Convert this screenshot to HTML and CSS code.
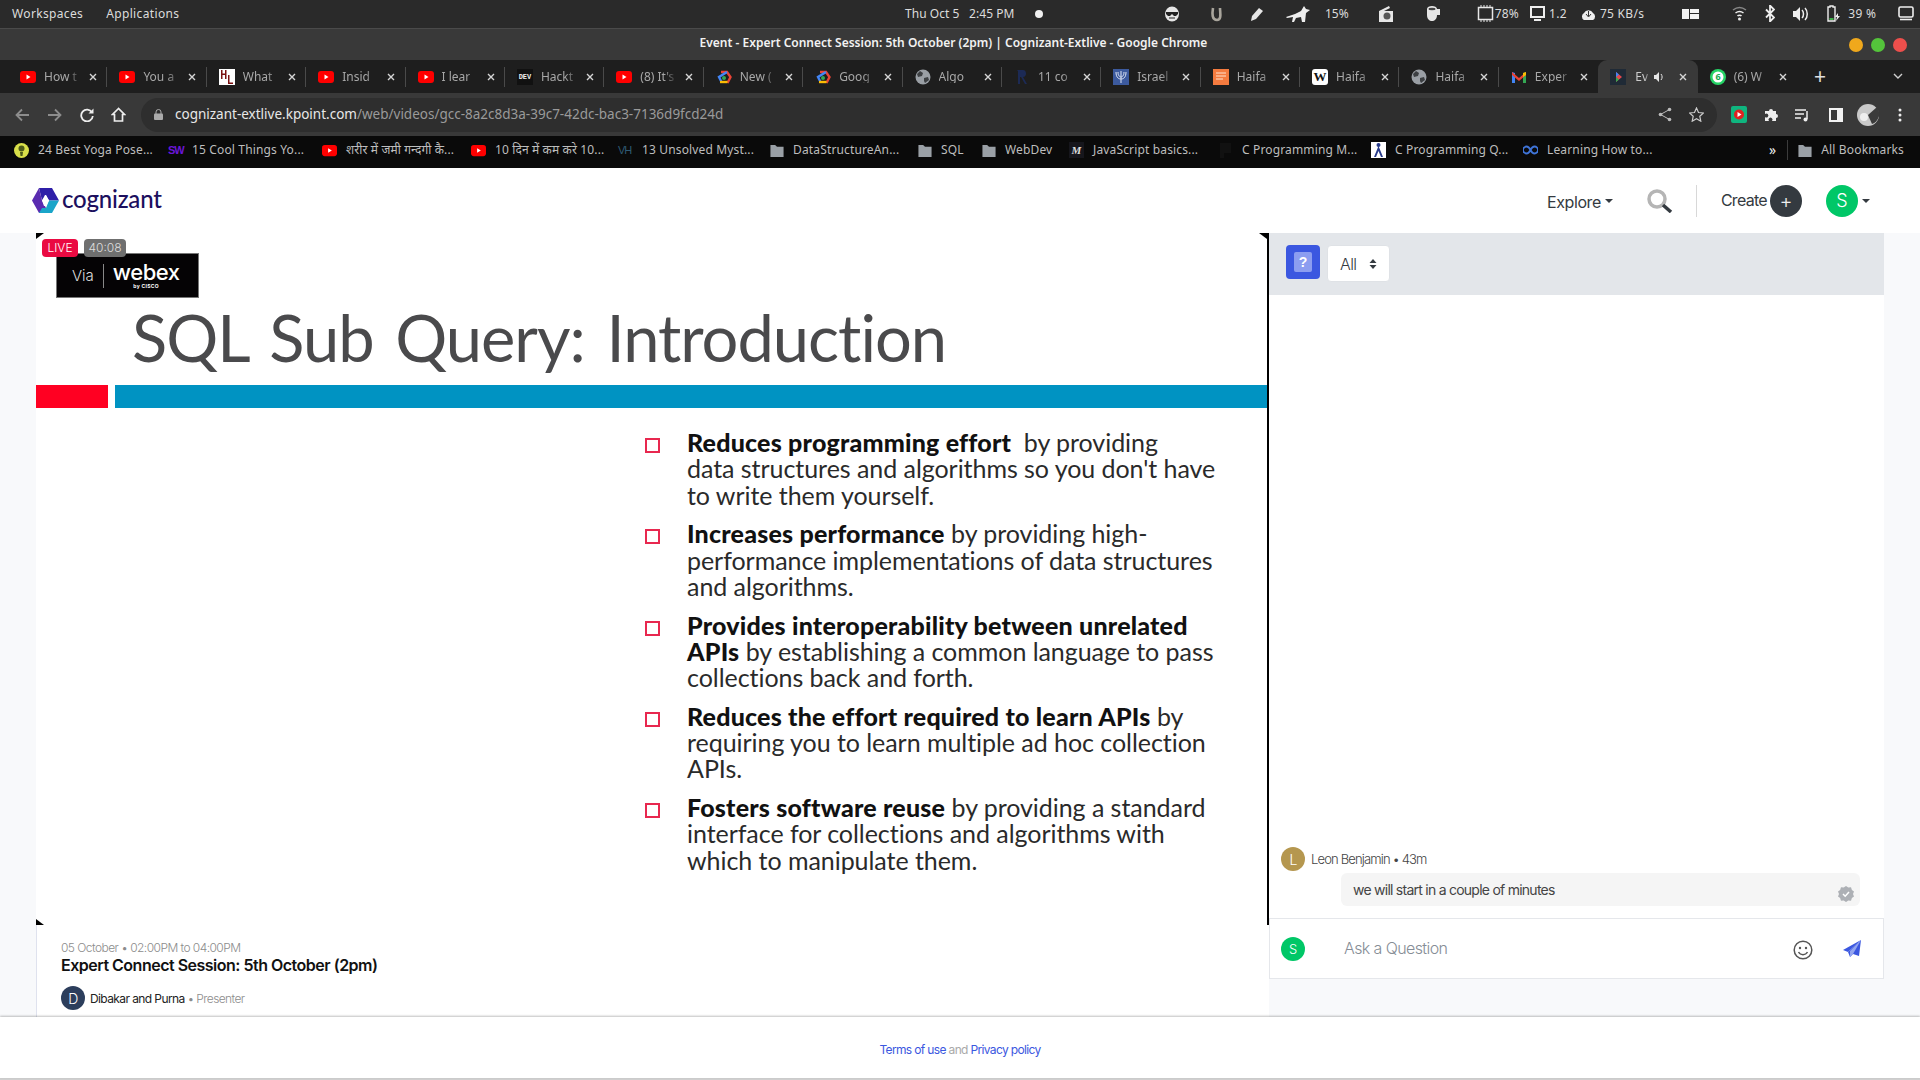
FILE: index.html
```html
<!DOCTYPE html>
<html lang="en">
<head>
<meta charset="utf-8">
<title>Event - Expert Connect Session</title>
<link rel="stylesheet" href="styles.css">
</head>
<body>
<svg class="defs" width="0" height="0" aria-hidden="true">
  <defs>
    <symbol id="yt" viewBox="0 0 16 16"><rect x="0" y="2" width="16" height="12" rx="3" fill="#f00"/><path d="M6.5 5.5v5l4-2.5z" fill="#fff"/></symbol>
    <symbol id="x" viewBox="0 0 8 8"><path d="M1 1l6 6M7 1l-6 6" stroke="#d6d6d6" stroke-width="1.4" fill="none"/></symbol>
    <symbol id="gc" viewBox="0 0 16 16"><path d="M5 3h6l3.500 5-3 6" stroke="#ea4335" stroke-width="2.400" fill="none"/><path d="M11 3l-8 5 2.500 5" stroke="#4285f4" stroke-width="2.400" fill="none"/><path d="M4 13h7.500" stroke="#fbbc04" stroke-width="2.400"/><circle cx="8" cy="9" r="2" fill="#34a853"/></symbol>
    <symbol id="globe" viewBox="0 0 16 16"><circle cx="8" cy="8" r="7.500" fill="#9a9fa5"/><path d="M5 2l3 2-1 3-4 1-1-3zM9 9l4-1 1 3-4 3-1-2z" fill="#3c3f42"/></symbol>
    <symbol id="folder" viewBox="0 0 14 16"><path d="M0 2h5l2 2h7v11H0z" fill="#9aa0a6"/></symbol>
  </defs>
</svg>

<header class="sysbar">
  <div class="sys-left"><span>Workspaces</span><span>Applications</span></div>
  <span class="clock">Thu Oct 5 &nbsp;&nbsp;2:45 PM</span>
  <span class="recdot"></span>
  <div class="sys-status">
    <svg class="st st-face" width="14" height="16" viewBox="0 0 14 16"><ellipse cx="7" cy="8" rx="7" ry="7.500" fill="#e6e6e6"/><path d="M1 6h12v2l-2 2H9L7 8 5 10H3L1 8z" fill="#222"/><path d="M4 12h6" stroke="#222"/></svg>
    <svg class="st st-j" width="12" height="16" viewBox="0 0 12 16"><path d="M3 2c-1 6-1 12 4 12s3-8 3-12" fill="none" stroke="#a9a59c" stroke-width="2.600"/></svg>
    <svg class="st st-pen" width="14" height="16" viewBox="0 0 14 16"><path d="M1 15l1-5 7-8 4 3-7 8z" fill="#e6e6e6"/></svg>
    <svg class="st st-dog" width="24" height="16" viewBox="0 0 24 16"><path d="M0 11l9-3 6-3 3-5 2 3 4 1-4 3-1 9h-3l-1-5-5 1-2 4H6l1-5-6 1z" fill="#eee"/></svg>
    <span class="st st-p15">15%</span>
    <svg class="st st-radio" width="16" height="17" viewBox="0 0 16 17"><path d="M1 6l10-5 1 2-6 3h9v11H1z" fill="#e6e6e6"/><circle cx="9" cy="11" r="3.500" fill="#555"/></svg>
    <svg class="st st-cup" width="16" height="17" viewBox="0 0 16 17"><path d="M1 4c0-4 10-4 10 0h3v6h-3c0 8-10 8-10 0z" fill="#e6e6e6"/><ellipse cx="6" cy="4" rx="3.500" ry="1.200" fill="#444"/></svg>
    <svg class="st st-cpu" width="17" height="17" viewBox="0 0 17 17"><rect x="1.500" y="2.500" width="14" height="12" fill="none" stroke="#e6e6e6" stroke-width="1.500"/><path d="M4 0v2M7 0v2M10 0v2M13 0v2M4 15v2M7 15v2M10 15v2M13 15v2" stroke="#e6e6e6"/></svg>
    <span class="st st-p78">78%</span>
    <svg class="st st-mon" width="15" height="15" viewBox="0 0 15 15"><rect x="1" y="1" width="13" height="10" fill="none" stroke="#eee" stroke-width="2"/><path d="M4 13h7v2H4z" fill="#eee"/></svg>
    <span class="st st-load">1.2</span>
    <svg class="st st-cloud" width="17" height="12" viewBox="0 0 17 12"><path d="M4 12a4 4 0 0 1 0-7 5 5 0 0 1 9 0 4 4 0 0 1 0 7z" fill="#eee"/><path d="M8.500 3v5M6 6l2.500 3L11 6" stroke="#333" fill="none"/></svg>
    <span class="st st-net">75 KB/s</span>
    <svg class="st st-lay" width="17" height="10" viewBox="0 0 17 10"><path d="M0 0h7v10H0zM8 0h9v4H8zM8 5h9v5H8z" fill="#f2f2f2"/></svg>
    <svg class="st st-wifi" width="15" height="15" viewBox="0 0 15 15"><path d="M1 4c4-3 9-3 13 0" stroke="#888" stroke-width="1.500" fill="none"/><path d="M3.500 7c2.500-2 5.500-2 8 0M5.500 10c1-1 3-1 4 0" stroke="#eee" stroke-width="1.500" fill="none"/><circle cx="7.500" cy="13" r="1.500" fill="#eee"/></svg>
    <svg class="st st-bt" width="10" height="17" viewBox="0 0 10 17"><path d="M1 4.500l8 8-4 4v-16l4 4-8 8" fill="none" stroke="#eee" stroke-width="1.800"/></svg>
    <svg class="st st-vol" width="16" height="14" viewBox="0 0 16 14"><path d="M0 4h3l4-4v14l-4-4H0z" fill="#eee"/><path d="M9 3c2 2 2 6 0 8M12 1c3 3 3 9 0 12" stroke="#eee" stroke-width="1.500" fill="none"/></svg>
    <svg class="st st-bat" width="14" height="17" viewBox="0 0 14 17"><path d="M3 1h3v1h2v14H1V2h2z" fill="none" stroke="#eee" stroke-width="1.400"/><rect x="2.500" y="13" width="4" height="2" fill="#3fae49"/><path d="M11 8l-3 4h2l-1 4 4-5h-2z" fill="#eee"/></svg>
    <span class="st st-pbat">39 %</span>
    <svg class="st st-screen" width="16" height="15" viewBox="0 0 16 15"><rect x="1" y="1" width="14" height="10" rx="1.500" fill="none" stroke="#eee" stroke-width="1.600"/><path d="M2 13.500h12" stroke="#eee" stroke-width="1.600"/></svg>
  </div>
</header>

<div class="titlebar">
  <span></span>
  <span class="wintitle">Event - Expert Connect Session: 5th October (2pm) | Cognizant-Extlive - Google Chrome</span>
  <div class="windots"><i class="dot amber"></i><i class="dot green"></i><i class="dot red"></i></div>
</div>

<nav class="tabs">
  <div class="tab"><svg class="fav"><use href="#yt"/></svg><span class="tname">How t</span><svg class="close"><use href="#x"/></svg></div>
  <div class="tab"><svg class="fav"><use href="#yt"/></svg><span class="tname">You a</span><svg class="close"><use href="#x"/></svg></div>
  <div class="tab"><svg class="fav" viewBox="0 0 16 16"><rect width="16" height="16" fill="#fff"/><path d="M2 1v9h1.500V6H6v4h1.500V1H6v3.500H3.500V1zM9 6v9h5v-1.500h-3.500V6z" fill="#7a1010"/></svg><span class="tname">What</span><svg class="close"><use href="#x"/></svg></div>
  <div class="tab"><svg class="fav"><use href="#yt"/></svg><span class="tname">Insid</span><svg class="close"><use href="#x"/></svg></div>
  <div class="tab"><svg class="fav"><use href="#yt"/></svg><span class="tname">I lear</span><svg class="close"><use href="#x"/></svg></div>
  <div class="tab"><span class="fav devfav">DEV</span><span class="tname">Hackt</span><svg class="close"><use href="#x"/></svg></div>
  <div class="tab"><svg class="fav"><use href="#yt"/></svg><span class="tname">(8) It's</span><svg class="close"><use href="#x"/></svg></div>
  <div class="tab"><svg class="fav"><use href="#gc"/></svg><span class="tname">New (</span><svg class="close"><use href="#x"/></svg></div>
  <div class="tab"><svg class="fav"><use href="#gc"/></svg><span class="tname">Goog</span><svg class="close"><use href="#x"/></svg></div>
  <div class="tab"><svg class="fav"><use href="#globe"/></svg><span class="tname">Algo</span><svg class="close"><use href="#x"/></svg></div>
  <div class="tab"><svg class="fav" viewBox="0 0 16 16"><path d="M3 1h6c4 0 4 7 0 7l4 7h-2L7 8H6v7H4V2z" fill="#1c2a55"/></svg><span class="tname">11 co</span><svg class="close"><use href="#x"/></svg></div>
  <div class="tab"><svg class="fav" viewBox="0 0 16 16"><rect width="16" height="16" fill="#3c5a9e"/><path d="M8 2v12M3 3c0 6 3 7 5 7s5-1 5-7M5 3c0 4 2 5 3 5s3-1 3-5" stroke="#dfe6f5" fill="none"/></svg><span class="tname">Israel</span><svg class="close"><use href="#x"/></svg></div>
  <div class="tab"><svg class="fav" viewBox="0 0 16 16"><rect width="16" height="16" fill="#f47b3f"/><path d="M3 4h10M3 7h10M3 10h7" stroke="#ffe3cf"/></svg><span class="tname">Haifa</span><svg class="close"><use href="#x"/></svg></div>
  <div class="tab"><span class="fav wikifav">W</span><span class="tname">Haifa</span><svg class="close"><use href="#x"/></svg></div>
  <div class="tab"><svg class="fav"><use href="#globe"/></svg><span class="tname">Haifa</span><svg class="close"><use href="#x"/></svg></div>
  <div class="tab"><svg class="fav" viewBox="0 0 16 16"><path d="M1 14V3l3 1v10z" fill="#4285f4"/><path d="M12 14V4l3-1v11z" fill="#34a853"/><path d="M1 3l7 6 7-6v3l-7 6-7-6z" fill="#ea4335"/><path d="M12 4l3-1v3l-3 2z" fill="#fbbc04"/></svg><span class="tname">Exper</span><svg class="close"><use href="#x"/></svg></div>
  <div class="tab active"><svg class="fav" viewBox="0 0 16 16"><rect width="16" height="16" fill="#1f2a36"/><path d="M6 3l6 5-6 5z" fill="#e5484d"/><path d="M6 3l3 2.500L6 8z" fill="#4285f4"/><path d="M6 13l3-2.500L6 8z" fill="#34a853"/></svg><span class="tname tshort">Ev</span><svg class="spk" width="10" height="12" viewBox="0 0 10 12"><path d="M0 4h2l3-3v10L2 8H0z" fill="#e6e6e6"/><path d="M7 3c1.500 2 1.500 4 0 6" stroke="#e6e6e6" fill="none"/></svg><svg class="close"><use href="#x"/></svg></div>
  <div class="tab last"><svg class="fav" viewBox="0 0 16 16"><circle cx="8" cy="8" r="8" fill="#25d366"/><circle cx="8" cy="8" r="5.500" fill="#fff"/><text x="8" y="11" class="wa-num">6</text></svg><span class="tname">(6) W</span><svg class="close"><use href="#x"/></svg></div>
  <span class="newtab">+</span>
  <svg class="tabmenu" width="10" height="7" viewBox="0 0 10 7"><path d="M1 1l4 4 4-4" stroke="#d0d0d0" stroke-width="1.400" fill="none"/></svg>
</nav>

<div class="toolbar">
  <svg class="nav-ic" width="14" height="14" viewBox="0 0 14 14"><path d="M14 7H2M7 1.500L1.500 7 7 12.500" stroke="#8d8d8d" stroke-width="1.800" fill="none"/></svg>
  <svg class="nav-ic fwd" width="14" height="14" viewBox="0 0 14 14"><path d="M0 7h12M7 1.500L12.500 7 7 12.500" stroke="#8d8d8d" stroke-width="1.800" fill="none"/></svg>
  <svg class="nav-ic rel" width="14" height="14" viewBox="0 0 14 14"><path d="M12 4.500A5.800 5.800 0 1 0 12.800 8" stroke="#eee" stroke-width="1.800" fill="none"/><path d="M13.500 0.500v5h-5z" fill="#eee"/></svg>
  <svg class="nav-ic home" width="15" height="15" viewBox="0 0 15 15"><path d="M7.500 1.500L1.500 7.500H3.500V14H11.500V7.500H13.500z" stroke="#eee" stroke-width="1.700" fill="none"/></svg>
  <div class="omnibox">
    <svg class="lock" width="9" height="11" viewBox="0 0 9 11"><path d="M2 5V3a2.500 2.500 0 0 1 5 0v2" stroke="#aaa" fill="none"/><rect y="4.500" width="9" height="6.500" rx="1" fill="#aaa"/></svg>
    <span class="url"><b>cognizant-extlive.kpoint.com</b>/web/videos/gcc-8a2c8d3a-39c7-42dc-bac3-7136d9fcd24d</span>
    <svg class="omni-r" width="14" height="15" viewBox="0 0 14 15"><circle cx="11.500" cy="2.500" r="1.800" fill="#bbb"/><circle cx="11.500" cy="12.500" r="1.800" fill="#bbb"/><circle cx="2.500" cy="7.500" r="1.800" fill="#bbb"/><path d="M11.500 2.500l-9 5 9 5" stroke="#bbb" fill="none"/></svg>
    <svg class="omni-star" width="15" height="15" viewBox="0 0 15 15"><path d="M7.500 1l2 4.500 5 .5-3.700 3.300 1 4.900-4.300-2.500-4.300 2.500 1-4.900L.5 6l5-.5z" stroke="#ccc" stroke-width="1.200" fill="none"/></svg>
  </div>
  <svg class="tb-ext" width="16" height="17" viewBox="0 0 16 17"><rect width="16" height="17" rx="2" fill="#0fb57f"/><circle cx="8" cy="8.500" r="5" fill="#e02020"/><path d="M6.500 6v5l4-2.500z" fill="#fff"/></svg>
  <svg class="tb-puz" width="15" height="15" viewBox="0 0 15 15"><path d="M1 4h4a2 2 0 1 1 4 0h3v3a2 2 0 1 1 0 4v3H8a2 2 0 1 0-3 0H1v-4a2 2 0 1 0 0-3z" fill="#eee"/></svg>
  <svg class="tb-mus" width="15" height="14" viewBox="0 0 15 14"><path d="M0 2h11M0 6h9M0 10h6" stroke="#eee" stroke-width="1.500"/><path d="M12 3v8" stroke="#eee" stroke-width="1.500"/><circle cx="10.500" cy="11.500" r="2" fill="#eee"/></svg>
  <svg class="tb-side" width="14" height="14" viewBox="0 0 14 14"><path d="M0 0h14v14H0zM2 2v10h6V2z" fill="#f2f2f2" fill-rule="evenodd"/></svg>
  <svg class="tb-av" width="22" height="22" viewBox="0 0 22 22"><circle cx="11" cy="11" r="11" fill="#c9c9c9"/><path d="M11 11l9-8a11 11 0 0 1-5 17z" fill="#3b3b3b"/><circle cx="7" cy="13" r="4" fill="#eee"/></svg>
  <svg class="tb-dots" width="4" height="14" viewBox="0 0 4 14"><circle cx="2" cy="2" r="1.500" fill="#eee"/><circle cx="2" cy="7" r="1.500" fill="#eee"/><circle cx="2" cy="12" r="1.500" fill="#eee"/></svg>
</div>

<div class="bookmarks">
  <div class="bm bm1"><svg width="15" height="15" viewBox="0 0 15 15"><circle cx="7.500" cy="7.500" r="7.500" fill="#d9e04a"/><circle cx="7.500" cy="5.500" r="3" fill="#4d5a1a"/><path d="M6 9h3l-.5 4h-2z" fill="#4d5a1a"/></svg><span>24 Best Yoga Pose...</span></div>
  <div class="bm bm2"><span class="swfav">SW</span><span>15 Cool Things Yo...</span></div>
  <div class="bm bm3"><svg width="15" height="15"><use href="#yt"/></svg><span>शरीर में जमी गन्दगी कै...</span></div>
  <div class="bm bm4"><svg width="15" height="15"><use href="#yt"/></svg><span>10 दिन में कम करे 10...</span></div>
  <div class="bm bm5"><span class="vhfav">VH</span><span>13 Unsolved Myst...</span></div>
  <div class="bm bm6"><svg width="14" height="15"><use href="#folder"/></svg><span>DataStructureAn...</span></div>
  <div class="bm bm7"><svg width="14" height="15"><use href="#folder"/></svg><span>SQL</span></div>
  <div class="bm bm8"><svg width="14" height="15"><use href="#folder"/></svg><span>WebDev</span></div>
  <div class="bm bm9"><span class="mfav">M</span><span>JavaScript basics...</span></div>
  <div class="bm bm10"><svg width="15" height="15" viewBox="0 0 15 15"><path d="M2 0h11v10H6v5H2z" fill="#111"/></svg><span>C Programming M...</span></div>
  <div class="bm bm11"><svg width="15" height="16" viewBox="0 0 15 16"><rect width="15" height="16" fill="#fff"/><path d="M7.500 4L3 15h2l2.500-6L10 15h2z" fill="#273a8a"/><circle cx="7.500" cy="3" r="2" fill="#273a8a"/></svg><span>C Programming Q...</span></div>
  <div class="bm bm12"><svg width="15" height="10" viewBox="0 0 15 10"><path d="M7.500 5C6 2 4.500 1.500 3.500 1.500a3.500 3.500 0 0 0 0 7C4.500 8.500 6 8 7.500 5s3-3.500 4-3.500a3.500 3.500 0 0 1 0 7c-1 0-2.500-.5-4-3.500z" fill="none" stroke="#3f74d8" stroke-width="1.800"/></svg><span>Learning How to...</span></div>
  <div class="bm-right">
    <span class="chev">»</span>
    <i class="bm-sep"></i>
    <svg width="14" height="15"><use href="#folder"/></svg><span>All Bookmarks</span>
  </div>
</div>

<header class="site">
  <div class="logo">
    <svg width="27" height="25" viewBox="0 0 27 25"><path d="M7 0h13l7 12.500H17l-3-5-4 5z" fill="#2f1fa8"/><path d="M7 0L0 12.500 7 25h4l3-5-4-7.500z" fill="#5a2bb0"/><path d="M27 12.500L20 25H7l3-5h4l3-7.500z" fill="#1aa5c9"/><path d="M17 12.500L14 18h-2l-2-5.500L13 7h1z" fill="#fff"/></svg>
    <span class="logotext">cognizant</span>
  </div>
  <div class="site-nav">
    <span class="explore">Explore</span><i class="caret"></i>
    <svg class="search" width="26" height="24" viewBox="0 0 26 24"><circle cx="10" cy="10" r="8" fill="none" stroke="#b5b5b5" stroke-width="3.500"/><path d="M16 16l8 7" stroke="#343a40" stroke-width="3.500"/></svg>
    <i class="vline"></i>
    <span class="create">Create</span>
    <span class="plus">+</span>
    <span class="avatar me">S</span><i class="caret"></i>
  </div>
</header>

<main class="main">
  <section class="player">
    <div class="slide">
      <i class="corner tl"></i><i class="corner tr"></i><i class="corner bl"></i>
      <div class="badges"><span class="live">LIVE</span><span class="time">40:08</span></div>
      <div class="webex"><span class="via">Via</span><i class="webex-sep"></i><span class="webex-name">webex<small>by CISCO</small></span></div>
      <h1 class="slide-title">SQL Sub Query: Introduction</h1>
      <div class="bars"><i class="bar-red"></i><i class="bar-blue"></i></div>
      <ul class="points">
        <li><b>Reduces programming effort</b>&nbsp; by providing<br>data structures and algorithms so you don't have<br>to write them yourself.</li>
        <li><b>Increases performance</b> by providing high-<br>performance implementations of data structures<br>and algorithms.</li>
        <li><b>Provides interoperability between unrelated<br>APIs</b> by establishing a common language to pass<br>collections back and forth.</li>
        <li><b>Reduces the effort required to learn APIs</b> by<br>requiring you to learn multiple ad hoc collection<br>APIs.</li>
        <li><b>Fosters software reuse</b> by providing a standard<br>interface for collections and algorithms with<br>which to manipulate them.</li>
      </ul>
    </div>
    <div class="meta">
      <div class="meta-date">05 October • 02:00PM to 04:00PM</div>
      <div class="meta-title">Expert Connect Session: 5th October (2pm)</div>
      <div class="presenter"><span class="avatar pres">D</span><span class="pname">Dibakar and Purna</span><span class="prole">&nbsp;• Presenter</span></div>
    </div>
  </section>

  <aside class="chat">
    <div class="chat-head">
      <span class="help"><span class="help-in">?</span></span>
      <div class="select"><span>All</span><svg width="8" height="12" viewBox="0 0 8 12"><path d="M4 1l3.500 4h-7zM4 11L.5 7h7z" fill="#343a40"/></svg></div>
    </div>
    <div class="messages">
      <div class="msg-who"><span class="avatar leon">L</span><span>Leon Benjamin • 43m</span></div>
      <div class="bubble"><span>we will start in a couple of minutes</span>
        <svg class="verified" width="16" height="16" viewBox="0 0 16 16"><path d="M8 0l2.300 1.500 2.700-.2.900 2.600 2.100 1.700-1 2.400 1 2.400-2.100 1.700-.9 2.600-2.700-.2L8 16l-2.300-1.500-2.700.2-.9-2.600L0 10.400 1 8 0 5.600l2.100-1.700.9-2.600 2.700.2z" fill="#adb0b5"/><path d="M5 8l2.200 2.200L11 6" stroke="#fff" stroke-width="1.500" fill="none"/></svg>
      </div>
    </div>
    <div class="ask">
      <span class="avatar me small">S</span>
      <span class="ask-ph">Ask a Question</span>
      <svg class="emoji" width="20" height="20" viewBox="0 0 20 20"><circle cx="10" cy="10" r="8.800" fill="none" stroke="#555" stroke-width="1.500"/><circle cx="7" cy="8" r="1.200" fill="#555"/><circle cx="13" cy="8" r="1.200" fill="#555"/><path d="M5.500 12c2 3.500 7 3.500 9 0" stroke="#555" stroke-width="1.500" fill="none"/></svg>
      <svg class="send" width="18" height="17" viewBox="0 0 18 17"><path d="M18 0L0 10l5 2z" fill="#3b57e0"/><path d="M18 0L5 12l2 5 3-3 6 2z" fill="#3b57e0"/><path d="M18 0L7 11l0 6 3-3z" fill="#93a5f0"/></svg>
    </div>
  </aside>
</main>

<footer class="foot"><a class="flink">Terms of use</a><span class="fand">&nbsp;and&nbsp;</span><a class="flink">Privacy policy</a></footer>
</body>
</html>
```
FILE: styles.css
```css
* { box-sizing: border-box; }
html, body { margin: 0; padding: 0; }
body {
  width: 1920px;
  height: 1080px;
  overflow: hidden;
  display: flex;
  flex-direction: column;
  background: #cfcfcf;
  font-family: "Inter", "Liberation Sans", sans-serif;
}
.defs { position: absolute; }
i { display: block; }

/* System bar */
.sysbar {
  height: 29px;
  flex: none;
  display: flex;
  align-items: center;
  background: #2a2a2a;
  border-bottom: 1px solid #4a4a4a;
  color: #dcdcdc;
  font: 12px/1 "Noto Sans", sans-serif;
  padding: 0 0 1px 12px;
}
.sys-left { display: flex; gap: 23px; width: 893px; letter-spacing: .35px; }
.clock { width: 130px; letter-spacing: .05px; }
.recdot { width: 8px; height: 8px; border-radius: 50%; background: #f0f0f0; }
.sys-status { display: flex; align-items: center; margin-left: 122px; }
.st { flex: none; }
.st-j { margin-left: 31px; }
.st-pen { margin-left: 28px; }
.st-dog { margin-left: 22px; }
.st-p15 { margin-left: 15px; }
.st-radio { margin-left: 29px; }
.st-cup { margin-left: 32px; }
.st-cpu { margin-left: 35px; }
.st-p78 { margin-left: 1px; letter-spacing: .2px; }
.st-mon { margin-left: 11px; }
.st-load { margin-left: 4px; letter-spacing: .3px; }
.st-cloud { margin-left: 13px; }
.st-net { margin-left: 3px; letter-spacing: .3px; }
.st-lay { margin-left: 38px; }
.st-wifi { margin-left: 33px; }
.st-bt { margin-left: 18px; }
.st-vol { margin-left: 18px; }
.st-bat { margin-left: 18px; }
.st-pbat { margin-left: 7px; letter-spacing: .3px; }
.st-screen { margin-left: 22px; }

/* Title bar */
.titlebar {
  height: 31px;
  flex: none;
  display: grid;
  grid-template-columns: 1fr auto 1fr;
  align-items: center;
  background: #393939;
  padding-right: 13px;
}
.wintitle { color: #f2f2f2; font: 600 12px/1 "Noto Sans", sans-serif; padding-bottom: 3px; }
.windots { display: flex; gap: 8px; justify-content: flex-end; }
.dot { width: 14px; height: 14px; border-radius: 50%; }
.amber { background: #f0a81c; }
.green { background: #54c43b; }
.red { background: #ed4f4c; }

/* Tabs */
.tabs {
  height: 33px;
  flex: none;
  display: flex;
  align-items: center;
  background: #1e1e1e;
  padding-left: 8px;
  color: #a8a8a8;
  font: 12px/1 "Noto Sans", sans-serif;
}
.tab {
  position: relative;
  flex: none;
  width: 99.4px;
  height: 33px;
  padding-left: 12px;
  display: flex;
  align-items: center;
}
.tab::after {
  content: "";
  position: absolute;
  right: 0;
  top: 7px;
  height: 20px;
  width: 1px;
  background: #4a4a4a;
}
.tab.active { background: #393939; border-radius: 9px 9px 0 0; color: #ccc; }
.tab.active::after, .tab.last::after { display: none; }
.tab:nth-child(16)::after { display: none; }
.fav { width: 16px; height: 16px; flex: none; }
.devfav {
  background: #111;
  color: #eee;
  font: 700 7px/16px "Liberation Mono", monospace;
  text-align: center;
}
.wikifav {
  background: #fff;
  color: #111;
  border-radius: 3px;
  font: 700 13px/16px "Liberation Serif", serif;
  text-align: center;
}
.wa-num { font: 700 9px "Noto Sans", sans-serif; fill: #12a84d; text-anchor: middle; }
.tname {
  width: 37px;
  margin-left: 8px;
  white-space: nowrap;
  -webkit-mask-image: linear-gradient(90deg, #000 65%, transparent);
  mask-image: linear-gradient(90deg, #000 65%, transparent);
}
.tshort { width: 15px; flex: none; margin-left: 9px; }
.spk { margin-left: 4px; flex: none; }
.close { width: 8px; height: 8px; margin-left: 8px; flex: none; }
.active .close { margin-left: 15px; }
.newtab { color: #e0e0e0; font: 400 21px/1 "Noto Sans", sans-serif; margin-left: 17px; width: 68px; }
.tabmenu { flex: none; margin-left: 11px; }

/* Toolbar */
.toolbar {
  height: 43px;
  flex: none;
  display: flex;
  align-items: center;
  background: #393939;
  padding-left: 15px;
}
.nav-ic { flex: none; }
.fwd { margin-left: 19px; }
.rel { margin-left: 18px; }
.home { margin-left: 17px; }
.omnibox {
  width: 1576px;
  flex: none;
  height: 34px;
  margin-left: 15px;
  border-radius: 17px;
  background: #2e2e2e;
  display: flex;
  align-items: center;
  padding-left: 13px;
}
.lock { flex: none; }
.url { margin-left: 12px; color: #9a9a9a; font: 13.500px/1 "Noto Sans", sans-serif; width: 1483px; flex: none; white-space: nowrap; padding-top: 1px; }
.url b { color: #e8e8e8; font-weight: 400; }
.omni-star { margin-left: 17px; flex: none; }
.omni-r { flex: none; }
.tb-ext { margin-left: 14px; flex: none; }
.tb-puz { margin-left: 17px; flex: none; }
.tb-mus { margin-left: 16px; flex: none; }
.tb-side { margin-left: 19px; flex: none; }
.tb-av { margin-left: 14px; flex: none; }
.tb-dots { margin-left: 19px; flex: none; }

/* Bookmarks */
.bookmarks {
  height: 32px;
  flex: none;
  display: flex;
  align-items: center;
  background: #0a0a0a;
  padding: 0 0 4px 14px;
  color: #bdbdbd;
  font: 12px/1 "Noto Sans", "Noto Sans CJK SC", sans-serif;
  letter-spacing: .15px;
}
.bm { display: flex; align-items: center; gap: 9px; flex: none; white-space: nowrap; }
.bm svg { flex: none; }
.bm1, .bm2 { width: 154px; }
.bm3 { width: 149px; }
.bm4 { width: 147px; }
.bm5 { width: 152px; }
.bm6 { width: 148px; }
.bm7 { width: 64px; }
.bm8 { width: 87px; }
.bm9 { width: 149px; }
.bm10 { width: 153px; }
.bm11 { width: 152px; }
.bm12 { width: 129px; }
.swfav { width: 15px; color: #6a16d8; font: 700 11px/1 "Liberation Sans", sans-serif; letter-spacing: -1px; }
.vhfav { width: 15px; color: #2f5a74; font: 400 11px/1 "Liberation Sans", sans-serif; letter-spacing: -1px; }
.mfav { width: 15px; height: 16px; background: #16161c; color: #ddd; font: italic 700 11px/16px "Liberation Serif", serif; text-align: center; }
.bm-right { display: flex; align-items: center; margin-left: 117px; }
.chev { color: #eee; font-size: 14px; }
.bm-sep { width: 1px; height: 20px; background: #3c3c3c; margin: 0 10px 0 11px; }
.bm-right span:last-child { margin-left: 9px; }

/* Site header */
.site {
  height: 65px;
  flex: none;
  background: #fff;
  display: flex;
  align-items: center;
  justify-content: space-between;
  padding: 0 50px 0 32px;
  color: #343a40;
}
.logo { display: flex; align-items: center; gap: 3px; }
.logotext { color: #1c0f5e; font: 500 24px/1 "Lato", sans-serif; letter-spacing: -.2px; padding-bottom: 3px; }
.site-nav { display: flex; align-items: center; }
.explore { font-size: 16px; letter-spacing: -.4px; padding-top: 2px; }
.caret {
  width: 0;
  height: 0;
  margin-left: 4px;
  border-left: 4px solid transparent;
  border-right: 4px solid transparent;
  border-top: 4px solid #343a40;
}
.search { margin-left: 34px; }
.vline { width: 1px; height: 32px; background: #d8d8d8; margin: 0 24px 0 23px; }
.create { font-size: 16px; letter-spacing: -.7px; margin-right: 3px; padding-bottom: 2px; }
.plus {
  width: 32px;
  height: 32px;
  border-radius: 50%;
  background: #343a40;
  color: #eee;
  display: flex;
  align-items: center;
  justify-content: center;
  font-size: 20px;
  font-weight: 300;
  margin-right: 24px;
}
.avatar {
  flex: none;
  border-radius: 50%;
  color: #fff;
  display: flex;
  align-items: center;
  justify-content: center;
  font-weight: 300;
}
.avatar.me { width: 32px; height: 32px; background: #00c767; font-size: 18px; }
.avatar.me.small { width: 24px; height: 24px; font-size: 13px; }

/* Main */
.main {
  height: 784px;
  flex: none;
  display: flex;
  background: #f8f9fb;
  padding-left: 36px;
}
.player { width: 1233px; flex: none; display: flex; flex-direction: column; }
.slide {
  position: relative;
  height: 692px;
  background: #fff;
  border-right: 2px solid #000;
  flex: none;
  color: #222;
}
.corner { position: absolute; width: 8px; height: 6px; background: #000; }
.tl { left: 0; top: 0; clip-path: polygon(0 0, 100% 0, 0 100%); }
.tr { right: 0; top: 0; clip-path: polygon(0 0, 100% 0, 100% 100%); }
.bl { left: 0; bottom: 0; clip-path: polygon(0 0, 100% 100%, 0 100%); }
.badges { position: absolute; left: 6px; top: 6px; display: flex; gap: 6px; z-index: 2; font-size: 12px; font-weight: 300; }
.live { width: 36px; height: 18px; border-radius: 4px; background: #ea0a42; color: #fff; line-height: 18px; text-align: center; }
.time { width: 42px; height: 18px; border-radius: 4px; background: #6f6f6f; color: #ddd; line-height: 18px; text-align: center; }
.webex {
  position: absolute;
  left: 20px;
  top: 20px;
  width: 143px;
  height: 45px;
  background: #050305;
  border: 1px solid #777;
  color: #fff;
  display: flex;
  align-items: center;
  padding-left: 15px;
  z-index: 1;
}
.via { font-size: 15px; font-weight: 300; color: #ddd; }
.webex-sep { width: 1px; height: 24px; background: #888; margin: 0 9px; }
.webex-name { font: 500 22px/1 "Inter", sans-serif; letter-spacing: -.5px; display: flex; flex-direction: column; align-items: center; margin-top: -1px; }
.webex-name small { font: 700 5px/1 "Inter", sans-serif; letter-spacing: .3px; margin-top: 1px; }
.slide-title {
  margin: 0;
  padding: 65px 0 0 96px;
  height: 152px;
  color: #4a4a4c;
  font: 400 65px/78px "Lato", sans-serif;
  letter-spacing: -1px;
  word-spacing: 6px;
  white-space: nowrap;
}
.bars { display: flex; gap: 7px; height: 23px; }
.bar-red { width: 72px; background: #ff0022; }
.bar-blue { flex: 1; background: #0093c2; }
.points {
  list-style: none;
  margin: 0;
  padding: 21px 0 0 651px;
  font: 400 25px/26.300px "Lato", sans-serif;
  letter-spacing: -.05px;
  white-space: nowrap;
  color: #2a2a2a;
}
.points li { position: relative; margin-bottom: 12.400px; }
.points li::before {
  content: "";
  position: absolute;
  left: -42px;
  top: 9px;
  width: 11px;
  height: 11px;
  border: 2px solid #e8284f;
}
.points b { font-weight: 900; color: #111; letter-spacing: .2px; }
.meta {
  flex: 1;
  background: #fff;
  border-left: 1px solid #dfe2ee;
  padding: 15px 0 0 24px;
}
.meta-date { font-size: 12px; font-weight: 300; letter-spacing: -.55px; color: #8c8c8c; line-height: 16px; }
.meta-title { font-size: 16px; font-weight: 600; letter-spacing: -.5px; color: #111; line-height: 20px; margin-top: -1px; }
.presenter { display: flex; align-items: center; margin-top: 11px; font-size: 12px; letter-spacing: -.6px; }
.avatar.pres { width: 24px; height: 24px; background: #2c3e5c; font-size: 14px; margin-right: 5px; }
.pname { color: #222; }
.prole { color: #8c8c8c; font-weight: 300; }

/* Chat */
.chat { width: 615px; flex: none; display: flex; flex-direction: column; padding-bottom: 38px; }
.chat-head {
  height: 62px;
  flex: none;
  background: #e3e6ea;
  display: flex;
  padding: 12px 0 0 17px;
  gap: 7px;
  align-items: flex-start;
}
.help {
  width: 34px;
  height: 34px;
  border-radius: 4px;
  background: #3b57e0;
  display: flex;
  align-items: center;
  justify-content: center;
}
.help-in {
  width: 18px;
  height: 20px;
  background: #8c9df0;
  border-radius: 2px;
  color: #fff;
  font: 700 14px/20px "Liberation Sans", sans-serif;
  text-align: center;
}
.select {
  width: 63px;
  height: 37px;
  background: #fff;
  border: 1px solid #dfe2e6;
  border-radius: 4px;
  display: flex;
  align-items: center;
  justify-content: space-between;
  padding: 0 12px;
  font-size: 16px;
  font-weight: 300;
  letter-spacing: -.6px;
  color: #343a40;
}
.messages {
  flex: 1;
  background: #fff;
  display: flex;
  flex-direction: column;
  justify-content: flex-end;
  padding: 0 24px 12px 12px;
}
.msg-who { display: flex; align-items: center; gap: 6px; font-size: 13px; font-weight: 300; letter-spacing: -.85px; color: #444; padding-bottom: 1px; }
.avatar.leon { width: 24px; height: 24px; background: #b5974f; font-size: 14px; }
.bubble {
  position: relative;
  height: 33px;
  margin: 1px 0 0 60px;
  background: #f5f5f5;
  border-radius: 6px;
  padding: 0 12px 1px;
  display: flex;
  align-items: center;
  font-size: 14px;
  letter-spacing: -.75px;
  color: #444;
}
.verified { position: absolute; right: 6px; top: 13px; }
.ask {
  height: 61px;
  flex: none;
  background: #fff;
  border: 1px solid #e5e7eb;
  display: flex;
  align-items: center;
  padding-left: 11px;
}
.ask-ph { margin-left: 39px; width: 449px; font-size: 16px; font-weight: 300; letter-spacing: -.6px; color: #868d96; padding-bottom: 1px; }
.emoji { flex: none; margin-top: 3px; }
.send { flex: none; margin-left: 30px; }

/* Footer */
.foot {
  height: 61px;
  flex: none;
  background: #fff;
  box-shadow: 0 -1px 2px rgba(0, 0, 0, .25);
  display: flex;
  align-items: center;
  justify-content: center;
  font-size: 12px;
  letter-spacing: -.65px;
  padding: 3px 0 0 0;
}
.flink { color: #3b57e0; }
.fand { color: #a9a9a9; }
```
